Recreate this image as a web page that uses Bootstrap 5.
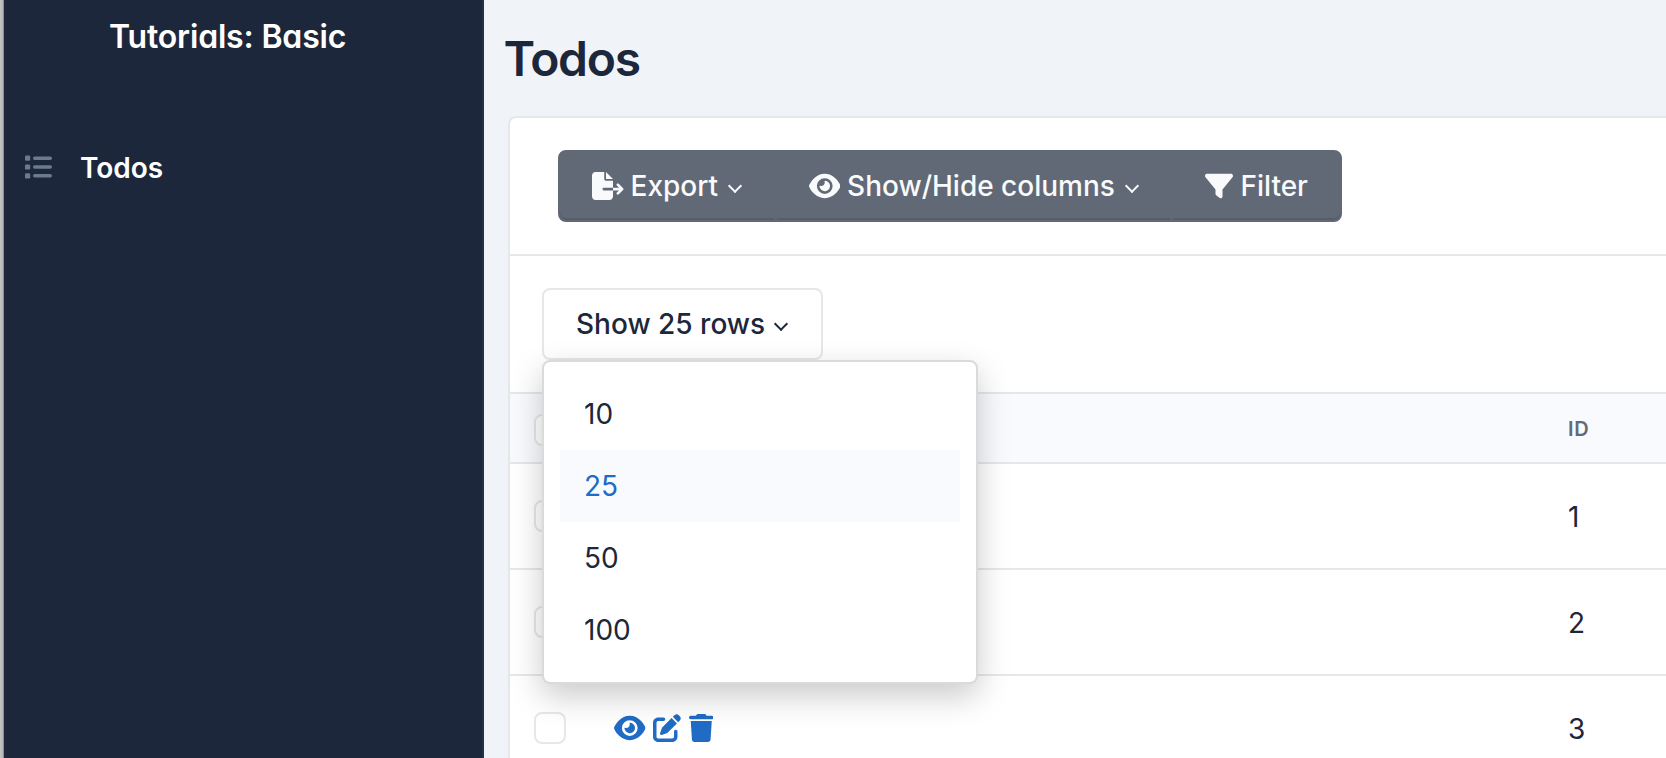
<!DOCTYPE html>
<html lang="en">
<head>
<meta charset="utf-8">
<meta name="viewport" content="width=device-width, initial-scale=1">
<title>Todos</title>
<link href="https://cdn.jsdelivr.net/npm/bootstrap@5.3.0/dist/css/bootstrap.min.css" rel="stylesheet">
<style>
  :root { --ink: #1d273b; --line: #e6e7e9; --tint: #f8fafe; --blue: #206bc4; --slate: #626976; }
  body { font-family: Inter, sans-serif; font-feature-settings: "cv03", "cv04", "cv11"; font-size: 28px; line-height: 40px; color: var(--ink); background: #f0f4f9; height: 758px; }
  .fa-glyph { height: 28px; width: auto; fill: currentColor; display: block; flex: none; }
  .window-edge { width: 4px; background: linear-gradient(90deg, #c3c6c4, #b4b7b6 70%, #6d7480); }
  .sidebar { width: 480px; background: var(--ink); border-right: 2px solid #243049; color: #fff; }
  .brand { font-size: 32px; line-height: 40px; font-weight: 600; letter-spacing: -.18px; padding: 17px 0 0 105px; height: 130px; }
  .menu-link { padding: 18px 0 0 20px; font-weight: 600; gap: 28px; line-height: 40px; }
  .menu-link svg { color: #6c7a91; margin-top: -2px; }
  .page-heading { font-size: 48px; line-height: 64px; font-weight: 600; letter-spacing: -1.3px; padding: 27px 0 25px 19.5px; }
  .panel { margin-left: 24px; height: 642px; overflow: hidden; border: 2px solid var(--line); --bs-card-border-radius: 8px; }
  .toolbar { padding: 32px 48px; border-bottom: 2px solid var(--line); }
  .length-bar { padding: 32px; }
  .btn { --bs-btn-font-size: 28px; --bs-btn-line-height: 40px; --bs-btn-padding-x: 32px; --bs-btn-padding-y: 14px; --bs-btn-border-width: 2px; --bs-btn-border-radius: 8px; --bs-btn-font-weight: 500; height: 72px; }
  .btn-slate { --bs-btn-color: #f8fafc; --bs-btn-bg: var(--slate); --bs-btn-border-color: var(--slate); gap: 7px; flex: none; box-shadow: inset 0 -2px 0 #565d6b; }
  .toolbar .btn + .btn { margin-left: -2px; }
  .btn-slate .chev { margin-left: 5px; margin-right: 1.5px; }
  .btn-rows { --bs-btn-color: var(--ink); --bs-btn-bg: #fff; --bs-btn-border-color: var(--line); }
  .chev { width: 10px; height: 10px; border: solid currentColor; border-width: 0 0 2px 2px; transform: rotate(-45deg); margin: 0 3px 0 3px; }
  .rows-menu.dropdown-menu { top: 72px; left: 0; width: 436px; padding: 16px; border: 2px solid #d9dadc; border-radius: 8px; box-shadow: 0 12px 32px rgba(0,0,0,.21); font-size: 28px;
    --bs-dropdown-link-color: var(--ink); --bs-dropdown-item-padding-x: 24px; --bs-dropdown-item-padding-y: 16px; --bs-dropdown-link-active-color: var(--blue); --bs-dropdown-link-active-bg: var(--tint); }
  .todo-table { table-layout: fixed; --bs-table-color: var(--ink); border-color: var(--line); margin: 0; }
  .todo-table tr > * { padding: 0 0 0 24px; border-bottom: 2px solid var(--line); vertical-align: middle; }
  .todo-table thead th { height: 70px; padding-top: 2px; border-top: 2px solid var(--line); background: var(--tint); color: var(--slate); font-size: 20px; font-weight: 600; letter-spacing: .8px; }
  .todo-table tbody td { height: 106px; }
  .todo-table tbody td:last-child { padding-top: 2px; }
  .pick { width: 80px; } .acts { width: 954px; }
  .todo-table .form-check-input { display: block; width: 32px; height: 32px; margin: 0; border: 2px solid var(--line); border-radius: 8px; }
  .todo-table thead .form-check-input { margin-top: 2px; }
  .row-actions { gap: 7.5px; color: var(--blue); margin-bottom: 1px; }
</style>
</head>
<body class="d-flex overflow-hidden">
<svg class="d-none">
  <symbol id="eye" viewBox="0 0 576 512"><path d="M288 32c-80.8 0-145.5 36.8-192.6 80.6C48.6 156 17.3 208 2.5 243.7c-3.3 7.9-3.3 16.7 0 24.6C17.3 304 48.6 356 95.4 399.4C142.5 443.2 207.2 480 288 480s145.5-36.8 192.6-80.6c46.8-43.5 78.1-95.4 93-131.1c3.3-7.9 3.3-16.7 0-24.6c-14.9-35.7-46.2-87.7-93-131.1C433.5 68.8 368.8 32 288 32zM144 256a144 144 0 1 1 288 0 144 144 0 1 1 -288 0zm144-64c0 35.3-28.7 64-64 64c-7.1 0-13.9-1.2-20.3-3.3c-5.5-1.8-11.9 1.6-11.7 7.4c.3 6.9 1.3 13.8 3.2 20.7c13.7 51.2 66.4 81.6 117.6 67.9s81.6-66.4 67.9-117.6c-11.1-41.5-47.8-69.4-88.6-71.1c-5.8-.2-9.2 6.1-7.4 11.7c2.1 6.4 3.3 13.2 3.3 20.3z"/></symbol>
  <symbol id="edit" viewBox="0 0 512 512"><path d="M471.6 21.7c-21.9-21.9-57.3-21.9-79.2 0L362.3 51.7l97.9 97.9 30.1-30.1c21.9-21.9 21.9-57.3 0-79.2L471.6 21.7zm-299.2 220c-6.1 6.1-10.8 13.6-13.5 21.9l-29.6 88.8c-2.9 8.6-.6 18.1 5.8 24.6s15.9 8.7 24.6 5.8l88.8-29.6c8.2-2.7 15.7-7.4 21.9-13.5L437.7 172.3 339.7 74.3 172.4 241.7zM96 64C43 64 0 107 0 160V416c0 53 43 96 96 96H352c53 0 96-43 96-96V320c0-17.7-14.3-32-32-32s-32 14.3-32 32v96c0 17.7-14.3 32-32 32H96c-17.7 0-32-14.3-32-32V160c0-17.7 14.3-32 32-32h96c17.7 0 32-14.3 32-32s-14.3-32-32-32H96z"/></symbol>
  <symbol id="trash" viewBox="0 0 448 512"><path d="M135.2 17.7L128 32H32C14.3 32 0 46.3 0 64S14.3 96 32 96H416c17.7 0 32-14.3 32-32s-14.3-32-32-32H320l-7.2-14.3C307.4 6.8 296.3 0 284.2 0H163.8c-12.1 0-23.2 6.8-28.6 17.7zM416 128H32L53.2 467c1.6 25.3 22.6 45 47.9 45H346.9c25.3 0 46.3-19.7 47.9-45L416 128z"/></symbol>
</svg>

<div class="window-edge flex-shrink-0"></div>
<aside class="sidebar flex-shrink-0">
  <div class="brand">Tutorials: Basic</div>
  <a class="menu-link d-flex align-items-center text-white text-decoration-none" href="#">
    <svg class="fa-glyph" width="28" height="28" viewBox="0 0 28 28"><rect x="1" y="2.6" width="5.2" height="5.2" rx="1.2"/><rect x="1" y="11.4" width="5.2" height="5.2" rx="1.2"/><rect x="1" y="20.2" width="5.2" height="5.2" rx="1.2"/><rect x="9" y="3.5" width="19" height="3.4" rx="1.7"/><rect x="9" y="12.3" width="19" height="3.4" rx="1.7"/><rect x="9" y="21.1" width="19" height="3.4" rx="1.7"/></svg>
    <span>Todos</span>
  </a>
</aside>

<main class="flex-grow-1">
  <h1 class="page-heading mb-0">Todos</h1>
  <div class="card panel border-end-0 border-bottom-0 rounded-end-0 rounded-bottom-0">
    <div class="toolbar d-flex">
      <div class="btn-group">
        <button class="btn btn-slate d-flex align-items-center" type="button">
          <svg class="fa-glyph" viewBox="0 0 576 512"><path d="M0 64C0 28.7 28.7 0 64 0H224V128c0 17.7 14.3 32 32 32H384V288H216c-13.3 0-24 10.7-24 24s10.7 24 24 24H384V448c0 35.3-28.7 64-64 64H64c-35.3 0-64-28.7-64-64V64zM384 336V288H494.1l-39-39c-9.4-9.4-9.4-24.6 0-33.9s24.6-9.4 33.9 0l80 80c9.4 9.4 9.4 24.6 0 33.9l-80 80c-9.4 9.4-24.6 9.4-33.9 0s-9.4-24.6 0-33.9l39-39H384zm0-208H256V0L384 128z"/></svg>
          <span>Export</span><span class="chev"></span>
        </button>
        <button class="btn btn-slate d-flex align-items-center" type="button">
          <svg class="fa-glyph" viewBox="0 0 576 512"><use href="#eye"/></svg>
          <span>Show/Hide columns</span><span class="chev"></span>
        </button>
        <button class="btn btn-slate d-flex align-items-center" type="button">
          <svg class="fa-glyph" viewBox="0 0 512 512"><path d="M3.9 54.9C10.5 40.9 24.5 32 40 32H472c15.5 0 29.5 8.9 36.1 22.9s4.6 30.5-5.2 42.5L320 320.9V448c0 12.1-6.8 23.2-17.7 28.6s-23.8 4.3-33.5-3l-64-48c-8.1-6-12.8-15.5-12.8-25.6V320.9L9 97.3C-.7 85.4-2.8 68.8 3.9 54.9z"/></svg>
          <span>Filter</span>
        </button>
      </div>
    </div>
    <div class="length-bar d-flex">
      <div class="dropdown">
        <button class="btn btn-rows d-flex align-items-center gap-2" type="button"><span>Show 25 rows</span><span class="chev"></span></button>
        <div class="dropdown-menu rows-menu show">
          <a class="dropdown-item" href="#">10</a>
          <a class="dropdown-item active" href="#">25</a>
          <a class="dropdown-item" href="#">50</a>
          <a class="dropdown-item" href="#">100</a>
        </div>
      </div>
    </div>
    <table class="table todo-table">
      <thead><tr><th class="pick"><input class="form-check-input" type="checkbox" aria-label="Select all"></th><th class="acts"></th><th>ID</th></tr></thead>
      <tbody>
        <tr><td><input class="form-check-input" type="checkbox" aria-label="Select row"></td><td></td><td>1</td></tr>
        <tr><td><input class="form-check-input" type="checkbox" aria-label="Select row"></td><td></td><td>2</td></tr>
        <tr><td><input class="form-check-input" type="checkbox" aria-label="Select row"></td>
          <td><div class="row-actions d-flex align-items-center">
            <svg class="fa-glyph" viewBox="0 0 576 512"><use href="#eye"/></svg>
            <svg class="fa-glyph" viewBox="0 0 512 512"><use href="#edit"/></svg>
            <svg class="fa-glyph" viewBox="0 0 448 512"><use href="#trash"/></svg>
          </div></td><td>3</td></tr>
      </tbody>
    </table>
  </div>
</main>
<script src="https://cdn.jsdelivr.net/npm/bootstrap@5.3.0/dist/js/bootstrap.bundle.min.js"></script>
</body>
</html>
